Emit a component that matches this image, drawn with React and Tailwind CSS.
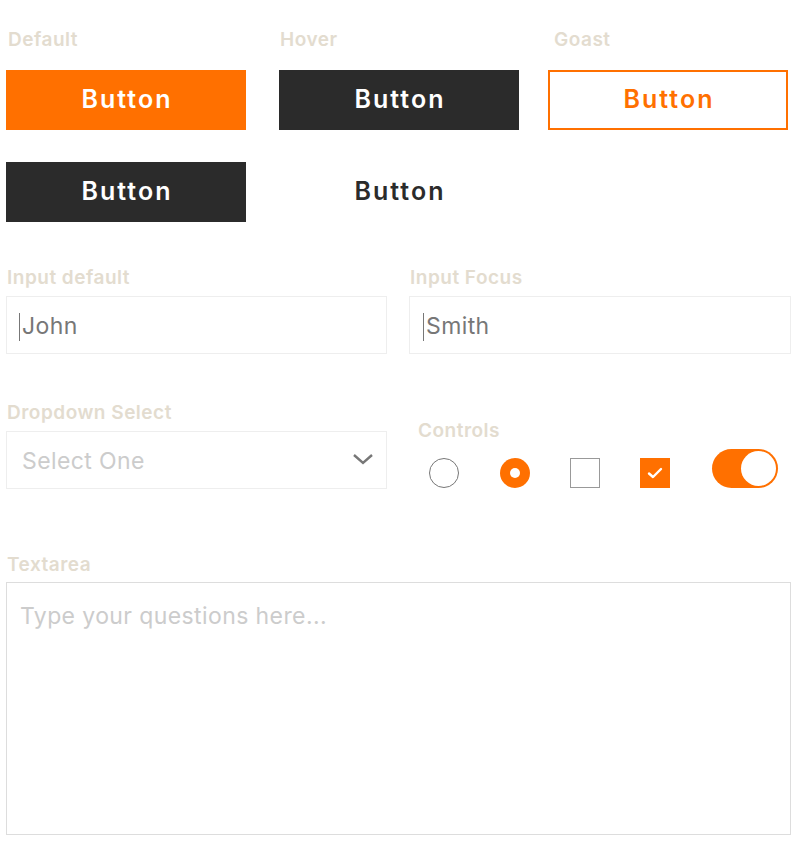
import React from "react";

const Label = ({ children, className = "" }) => (
  <p
    className={`text-[19px] leading-6 font-semibold tracking-[0.5px] text-[#e3dccf] ${className}`}
  >
    {children}
  </p>
);

const btnBase =
  "h-[60px] w-[240px] flex items-center justify-center text-[25px] font-semibold tracking-[2px] pl-[2px]";

const fieldText = "text-[23px] tracking-[0.4px]";

const App = () => {
  return (
    <div
      className="min-h-screen w-[800px] bg-white pl-[6px] pt-[28px] pb-[15px]"
      style={{ fontFamily: "Inter, 'Noto Sans', sans-serif" }}
    >
      {/* Buttons */}
      <div className="flex">
        <div className="w-[240px]">
          <Label className="pl-[2px]">Default</Label>
          <button className={`${btnBase} mt-[18px] bg-[#ff7000] text-white`}>
            Button
          </button>
        </div>
        <div className="w-[240px] ml-[33px]">
          <Label className="pl-[1px]">Hover</Label>
          <button className={`${btnBase} mt-[18px] bg-[#2b2b2b] text-white`}>
            Button
          </button>
        </div>
        <div className="w-[240px] ml-[29px]">
          <Label className="pl-[6px]">Goast</Label>
          <button
            className={`${btnBase} mt-[18px] border-2 border-[#ff7000] text-[#ff7000]`}
          >
            Button
          </button>
        </div>
      </div>
      <div className="flex mt-[32px]">
        <button className={`${btnBase} bg-[#2b2b2b] text-white`}>Button</button>
        <button className={`${btnBase} ml-[33px] text-[#2b2b2b]`}>Button</button>
      </div>

      {/* Inputs */}
      <div className="flex mt-[44px] w-[785px] gap-[22px]">
        <div className="w-[381px]">
          <Label className="pl-[1px]">Input default</Label>
          <div className="mt-[6px] h-[58px] border border-[#eeeeee] flex items-center pl-[12px] pt-[3px]">
            <span className="w-px h-[28px] bg-[#777]" />
            <span className={`${fieldText} text-[#777] ml-[2px]`}>John</span>
          </div>
        </div>
        <div className="w-[382px]">
          <Label className="pl-[1px]">Input Focus</Label>
          <div className="mt-[6px] h-[58px] border border-[#eeeeee] flex items-center pl-[13px] pt-[3px]">
            <span className="w-px h-[28px] bg-[#777]" />
            <span className={`${fieldText} text-[#777] ml-[2px]`}>Smith</span>
          </div>
        </div>
      </div>

      {/* Dropdown + controls */}
      <div className="flex mt-[47px] w-[785px]">
        <div className="w-[381px]">
          <Label className="pl-[1px]">Dropdown Select</Label>
          <div className="mt-[6px] h-[58px] border border-[#eeeeee] flex items-center justify-between pl-[15px] pr-[12px] pt-[3px]">
            <span className={`${fieldText} text-[#cccccc]`}>Select One</span>
            <svg width="22" height="14" viewBox="0 0 22 14" fill="none" className="-mt-[5px]">
              <path d="M2 3l9 8 9-8" stroke="#777" strokeWidth="2.4" />
            </svg>
          </div>
        </div>
        <div className="ml-[31px] pt-[18px]">
          <Label className="pl-0">Controls</Label>
          <div className="flex items-center mt-[6px] pl-[11px] h-[39px] translate-y-[4px]">
            <span className="w-[30px] h-[30px] rounded-full border border-[#777]" />
            <span className="ml-[41px] w-[30px] h-[30px] rounded-full bg-[#ff7000] flex items-center justify-center">
              <span className="w-[10px] h-[10px] rounded-full bg-white" />
            </span>
            <span className="ml-[40px] w-[30px] h-[30px] border border-[#999]" />
            <span className="ml-[40px] w-[30px] h-[30px] bg-[#ff7000] flex items-center justify-center">
              <svg width="16" height="12" viewBox="0 0 16 12" fill="none">
                <path
                  d="M2 6.5l4 3.5L14 2"
                  stroke="#fff"
                  strokeWidth="2.4"
                  strokeLinecap="round"
                  strokeLinejoin="round"
                />
              </svg>
            </span>
            <span className="ml-[42px] w-[66px] h-[39px] rounded-full bg-[#ff7000] flex items-center justify-end pr-[2px] -translate-y-[4px]">
              <span className="w-[35px] h-[35px] rounded-full bg-white" />
            </span>
          </div>
        </div>
      </div>

      {/* Textarea */}
      <div className="mt-[64px] w-[785px]">
        <Label className="pl-[1px]">Textarea</Label>
        <div className="mt-[5px] h-[253px] border border-[#dddddd] px-[13px] pt-[16px]">
          <span className={`${fieldText} text-[#cccccc]`}>
            Type your questions here...
          </span>
        </div>
      </div>
    </div>
  );
};

export default App;
